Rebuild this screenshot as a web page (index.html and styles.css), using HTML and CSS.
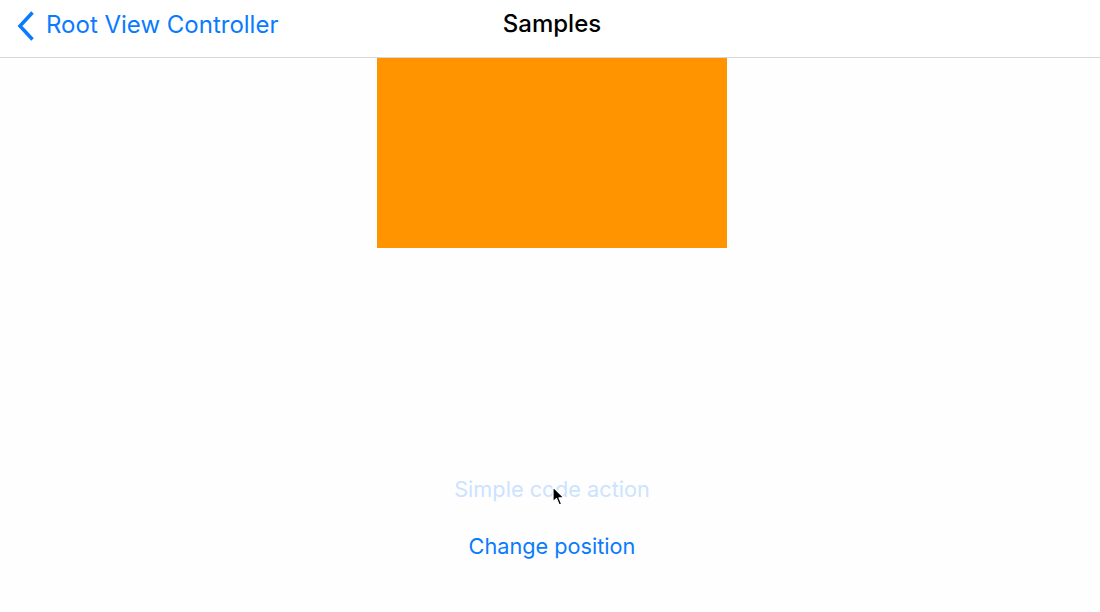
FILE: index.html
```html
<!DOCTYPE html>
<html>
<head>
<meta charset="utf-8">
<link rel="stylesheet" href="styles.css">
</head>
<body>
<div class="screen">
  <header class="navbar">
    <a class="back">
      <svg class="chevron" width="20" height="32" viewBox="0 0 20 32"><path d="M16.5 2.5 L4 16 L16.5 29.5" fill="none" stroke="#0a7aff" stroke-width="3.5" stroke-linecap="butt" stroke-linejoin="miter"/></svg>
      <span class="back-label">Root View Controller</span>
    </a>
    <h1 class="title">Samples</h1>
  </header>
  <main class="content">
    <div class="box"></div>
    <div class="actions">
      <button class="action disabled">Simple code action</button>
      <button class="action">Change position</button>
    </div>
  </main>
  <svg class="cursor" width="14" height="22" viewBox="0 0 14 22"><path d="M1 1 L1 16 L4.5 12.5 L7.2 19 L9.6 18 L7 11.8 L12 11.8 Z" fill="#000" stroke="#fff" stroke-width="1.2" stroke-linejoin="round"/></svg>
</div>
</body>
</html>
```
FILE: styles.css
```css
html, body {
  margin: 0;
  padding: 0;
  background: #fefefe;
}
.screen {
  position: relative;
  width: 1100px;
  height: 612px;
  overflow: hidden;
  font-family: Inter, Roboto, "Liberation Sans", sans-serif;
}
.navbar {
  position: relative;
  height: 57px;
  border-bottom: 1px solid #d6d6d6;
  background: #ffffff;
  display: flex;
  align-items: center;
}
.back {
  display: flex;
  align-items: center;
  padding-left: 16px;
  color: #0a7aff;
}
.chevron {
  display: block;
  margin-right: 10px;
  margin-top: -6px;
}
.back-label {
  font-size: 24px;
  line-height: 30px;
  margin-top: -7px;
}
.title {
  position: absolute;
  left: 4px;
  right: 0;
  top: 0;
  line-height: 48px;
  margin: 0;
  text-align: center;
  font-size: 24px;
  font-weight: 500;
  color: #000;
}
.content {
  display: flex;
  flex-direction: column;
  align-items: center;
  padding-left: 4px;
}
.box {
  width: 350px;
  height: 190px;
  background: #ff9300;
}
.actions {
  margin-top: 224px;
  display: flex;
  flex-direction: column;
  align-items: center;
  gap: 23px;
}
.action {
  border: 0;
  background: none;
  padding: 0;
  font-family: inherit;
  font-size: 21.7px;
  line-height: 34px;
  color: #0a7aff;
}
.action.disabled {
  color: #cce3fe;
}
.cursor {
  position: absolute;
  left: 552px;
  top: 486px;
}
```
